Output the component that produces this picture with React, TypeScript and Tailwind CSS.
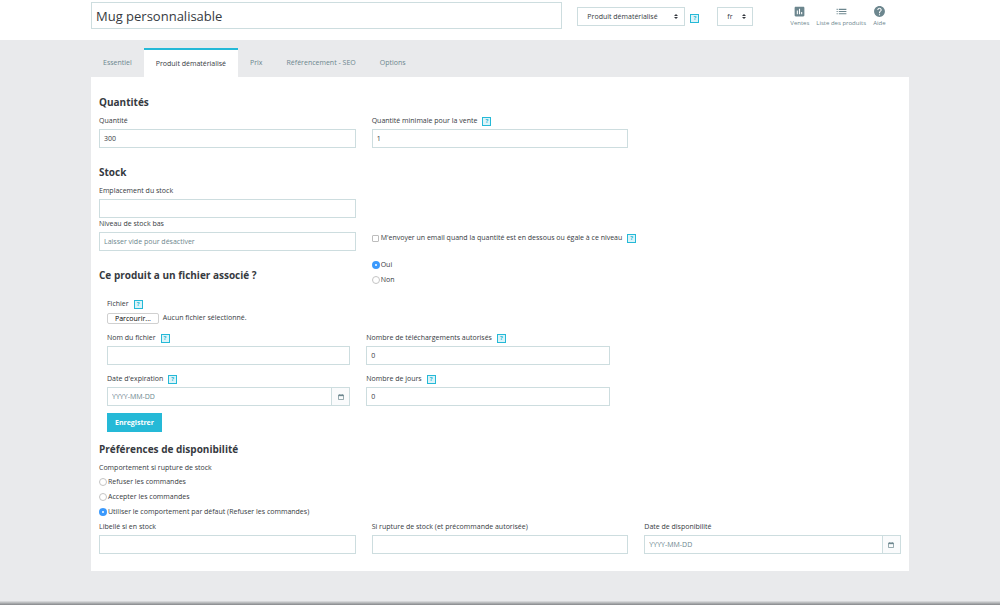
import React from 'react';
import { MdAssessment, MdHelp, MdList } from 'react-icons/md';

function HelpBadge() {
  return (
    <button
      type="button"
      aria-label="Aide"
      className="flex size-[9px] shrink-0 items-center justify-center border border-[#25b9d7] bg-[#dcf4f9] text-[6px] leading-none font-bold text-[#25b9d7]"
    >
      ?
    </button>
  );
}

const inputClass =
  'h-[19px] w-full min-w-0 border border-[#cddddf] bg-white px-1 text-[#363a41] outline-none placeholder:text-[#6c868e] placeholder:opacity-100';

type FieldProps = {
  id: string;
  label: string;
  value?: string;
  placeholder?: string;
  help?: boolean;
  date?: boolean;
};

function Field({ id, label, value, placeholder, help, date }: FieldProps) {
  return (
    <div className="min-w-0">
      <div className="mb-[2px] flex h-3 items-center gap-[5px]">
        <label htmlFor={id}>{label}</label>
        {help && <HelpBadge />}
      </div>
      <div className="flex">
        <input
          id={id}
          type="text"
          defaultValue={value}
          placeholder={date ? 'YYYY-MM-DD' : placeholder}
          className={inputClass}
        />
        {date && (
          <button
            type="button"
            aria-label="Choisir une date"
            className="flex h-[19px] w-[18px] shrink-0 items-center justify-center border border-l-0 border-[#cddddf] bg-[#fafbfc]"
          >
            <svg viewBox="0 0 12 12" className="size-[6px]" fill="none" stroke="#6c868e" strokeWidth="1.4">
              <path d="M1 2h10v9H1z" />
              <path d="M1 3h10" strokeWidth="2.6" />
              <path d="M3.5 0v2M8.5 0v2" />
            </svg>
          </button>
        )}
      </div>
    </div>
  );
}

function Radio({ name, label, checked }: { name: string; label: string; checked?: boolean }) {
  return (
    <label className="flex h-[15px] items-center gap-px">
      <input
        type="radio"
        name={name}
        defaultChecked={checked}
        className="size-2 shrink-0 appearance-none rounded-full border border-[#c4c4c4] bg-white checked:border-[3px] checked:border-[#3b99fc]"
      />
      {label}
    </label>
  );
}

function Heading({ children }: { children: React.ReactNode }) {
  return <h2 className="h-4 text-[10px] leading-4 font-bold">{children}</h2>;
}

function Select({ label, value, className }: { label: string; value: string; className: string }) {
  return (
    <div className={className}>
      <select
        aria-label={label}
        className="h-[19px] w-full appearance-none border border-[#cddddf] bg-white pl-[9px] outline-none"
      >
        <option>{value}</option>
      </select>
      <svg viewBox="0 0 4 5" className="pointer-events-none absolute top-[7px] right-[7px] h-[5px] w-1" fill="#363a41">
        <path d="M0 2 2 0l2 2zM0 3h4L2 5z" />
      </svg>
    </div>
  );
}

const tabs = ['Essentiel', 'Produit dématérialisé', 'Prix', 'Référencement - SEO', 'Options'];

export default function App() {
  return (
    <div className="bg-white font-['Open_Sans','Noto_Sans',sans-serif] text-[7px] leading-[12px] text-[#363a41]">
      <header className="flex h-10 items-start pr-[114px] pl-[91px]">
        <input
          aria-label="Nom du produit"
          defaultValue="Mug personnalisable"
          className="mt-[2px] h-[27px] min-w-0 flex-1 border border-[#cddddf] px-1 text-[13px] outline-none"
        />
        <div className="mt-[7px] ml-[15px] flex items-center">
          <Select label="Type de produit" value="Produit dématérialisé" className="relative w-[108px]" />
          <div className="mt-[3px] mr-[18px] ml-[5px]">
            <HelpBadge />
          </div>
          <Select label="Langue" value="fr" className="relative w-9" />
        </div>
        <nav className="mt-[5px] ml-[37px] flex gap-[7px] text-[6px] text-[#6c868e]">
          <a href="#ventes" className="flex flex-col items-center">
            <MdAssessment size={13} />
            <span className="leading-[10px]">Ventes</span>
          </a>
          <a href="#produits" className="flex flex-col items-center">
            <MdList size={13} />
            <span className="leading-[10px]">Liste des produits</span>
          </a>
          <a href="#aide" className="flex flex-col items-center">
            <MdHelp size={13} />
            <span className="leading-[10px]">Aide</span>
          </a>
        </nav>
      </header>

      <main className="bg-[#e9eaec] pt-2">
        <div role="tablist" className="mx-[91px] flex h-[29px] text-[#6c868e]">
          {tabs.map((tab, i) => (
            <button
              key={tab}
              type="button"
              role="tab"
              aria-selected={i === 1}
              className="border-t-2 border-transparent px-3 pb-[2px] aria-selected:border-[#25b9d7] aria-selected:bg-white aria-selected:pb-0 aria-selected:text-[#363a41]"
            >
              {tab}
            </button>
          ))}
        </div>

        <form className="mx-[91px] bg-white px-2 py-[17px]" onSubmit={(e) => e.preventDefault()}>
          <Heading>Quantités</Heading>
          <div className="mt-[5px] grid grid-cols-3 gap-x-4">
            <Field id="qty" label="Quantité" value="300" />
            <Field id="min-qty" label="Quantité minimale pour la vente" value="1" help />
          </div>

          <div className="mt-4">
            <Heading>Stock</Heading>
          </div>
          <div className="mt-[5px] grid grid-cols-3 items-end gap-x-4">
            <div>
              <Field id="location" label="Emplacement du stock" />
              <Field id="low-stock" label="Niveau de stock bas" placeholder="Laisser vide pour désactiver" />
            </div>
            <div className="col-span-2 flex h-[26px] items-center gap-[5px]">
              <label className="flex items-center gap-[2px]">
                <input
                  type="checkbox"
                  className="size-[7px] appearance-none rounded-[1px] border border-[#bdbdbd] bg-white checked:bg-[#3b99fc]"
                />
                M'envoyer un email quand la quantité est en dessous ou égale à ce niveau
              </label>
              <HelpBadge />
            </div>
          </div>

          <div className="mt-[6px] grid grid-cols-3 items-center gap-x-4">
            <div className="pt-[6px]">
              <Heading>Ce produit a un fichier associé ?</Heading>
            </div>
            <div>
              <Radio name="file" label="Oui" checked />
              <Radio name="file" label="Non" />
            </div>
          </div>

          <div className="mt-[11px] pr-8 pl-2">
            <div className="flex h-3 items-center gap-[5px]">
              <label htmlFor="file">Fichier</label>
              <HelpBadge />
            </div>
            <label className="mt-[2px] flex h-3 items-center gap-1">
              <input id="file" type="file" className="sr-only" />
              <span className="h-[11px] rounded-[2px] border border-[#d0d0d0] px-[7px] leading-[9px] text-black">
                Parcourir...
              </span>
              Aucun fichier sélectionné.
            </label>
            <div className="mt-2 grid grid-cols-3 gap-x-4 gap-y-2">
              <Field id="filename" label="Nom du fichier" help />
              <Field id="downloads" label="Nombre de téléchargements autorisés" value="0" help />
              <div />
              <Field id="expiry" label="Date d'expiration" help date />
              <Field id="days" label="Nombre de jours" value="0" help />
            </div>
            <button type="submit" className="mt-[7px] block h-[19px] bg-[#25b9d7] px-2 font-bold text-white">
              Enregistrer
            </button>
          </div>

          <div className="mt-[9px]">
            <Heading>Préférences de disponibilité</Heading>
          </div>
          <fieldset className="mt-[5px]">
            <legend className="h-3">Comportement si rupture de stock</legend>
            <Radio name="behavior" label="Refuser les commandes" />
            <Radio name="behavior" label="Accepter les commandes" />
            <Radio name="behavior" label="Utiliser le comportement par défaut (Refuser les commandes)" checked />
          </fieldset>
          <div className="mt-[2px] grid grid-cols-3 gap-x-4">
            <Field id="in-stock" label="Libellé si en stock" />
            <Field id="out-stock" label="Si rupture de stock (et précommande autorisée)" />
            <Field id="available" label="Date de disponibilité" date />
          </div>
        </form>
        <div className="mt-[30px] h-1 bg-linear-to-b from-[#e0e1e3] to-[#85878a]" />
      </main>
    </div>
  );
}
